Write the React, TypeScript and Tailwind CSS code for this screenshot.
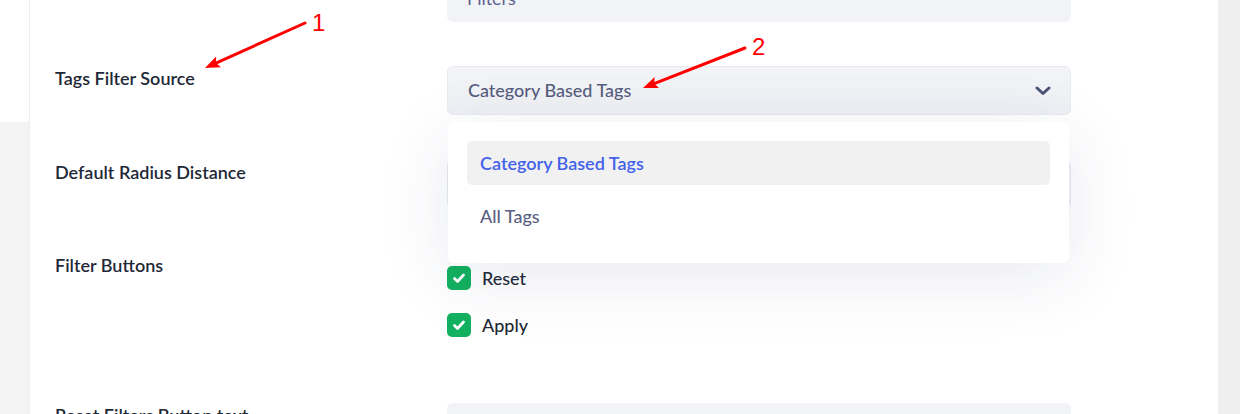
import React from 'react';

const FONT = "font-['Lato','Liberation_Sans',sans-serif]";

// Annotation arrows drawn over the page
const Arrow = ({ x1, y1, x2, y2 }: { x1: number; y1: number; x2: number; y2: number }) => {
  const angle = Math.atan2(y2 - y1, x2 - x1);
  const len = 16;
  const spread = 0.38;
  const ax = x2 - len * Math.cos(angle - spread);
  const ay = y2 - len * Math.sin(angle - spread);
  const bx = x2 - len * Math.cos(angle + spread);
  const by = y2 - len * Math.sin(angle + spread);
  const bx2 = x2 - (len - 4) * Math.cos(angle);
  const by2 = y2 - (len - 4) * Math.sin(angle);
  return (
    <g>
      <line x1={x1} y1={y1} x2={bx2} y2={by2} stroke="#f00" strokeWidth={3} strokeLinecap="round" />
      <polygon points={`${x2},${y2} ${ax},${ay} ${bx2},${by2} ${bx},${by}`} fill="#f00" />
    </g>
  );
};

const Check = () => (
  <span className="flex h-6 w-6 items-center justify-center rounded-[5px] bg-[#12b15f]">
    <svg width="14" height="14" viewBox="0 0 14 14" fill="none">
      <path d="M2.5 7.5l3 3 6-6.5" stroke="#fff" strokeWidth="2.8" strokeLinecap="round" strokeLinejoin="round" />
    </svg>
  </span>
);

const Label = ({ children }: { children: React.ReactNode }) => (
  <div className="w-[417px] shrink-0 pl-[25px] text-[18px] leading-6 font-semibold text-[#1f2937]">{children}</div>
);

const Input = ({ children, className = '' }: { children?: React.ReactNode; className?: string }) => (
  <div className={`flex h-12 w-[624px] items-center rounded-md bg-[#f2f3f6] px-5 text-[18px] text-[#5b6290] ${className}`}>
    {children}
  </div>
);

export default function App() {
  return (
    <div className={`relative flex h-[414px] w-[1240px] overflow-hidden bg-[#efefef] ${FONT}`}>
      <div className="flex w-[30px] shrink-0 flex-col border-r border-[#eeeeee]">
        <div className="h-[122px] bg-white" />
        <div className="flex-1 bg-[#f3f3f3]" />
      </div>
      <div className="relative w-[1188px] shrink-0 bg-white">
        <div className="mt-[-25px] flex flex-col gap-[44px]">
          <div className="flex">
            <Label>{''}</Label>
            <Input className="h-[47px]">Filters</Input>
          </div>

          <div className="flex items-start">
            <Label>Tags Filter Source</Label>
            <div className="relative z-10">
              <div className="flex h-[49px] w-[624px] items-center justify-between rounded-md border border-[#e9eaf0] bg-gradient-to-b from-[#f3f4f7] to-[#eff0f4] pr-[19px] pl-5 text-[18px] font-medium text-[#565d7e]">
                <span>Category Based Tags</span>
                <svg width="16" height="10" viewBox="0 0 16 10" fill="none">
                  <path d="M2 2l6 5.5L14 2" stroke="#4a5276" strokeWidth="3" strokeLinecap="round" strokeLinejoin="round" />
                </svg>
              </div>
              <div className="absolute top-[56px] left-px w-[621px] rounded-md bg-white px-[19px] pt-[19px] pb-[21px] shadow-[0_14px_70px_rgba(40,50,110,0.10)]">
                <div className="flex h-[44px] items-center rounded-[5px] bg-[#f1f1f1] px-[13px] text-[18px] font-semibold text-[#4262ea]">
                  Category Based Tags
                </div>
                <div className="flex h-[57px] items-center px-[13px] pt-[6px] text-[18px] font-medium text-[#5b6182]">All Tags</div>
              </div>
            </div>
          </div>

          <div className="flex items-start pt-px">
            <Label>Default Radius Distance</Label>
            <Input className="border border-[#e9eaf0]" />
          </div>

          <div className="flex items-start pt-px">
            <Label>Filter Buttons</Label>
            <div className="flex flex-col gap-[23px] pt-[13px] pb-[22px]">
              <label className="flex items-center gap-[11px] text-[18px] leading-6 font-medium text-[#1f2937]">
                <Check />
                Reset
              </label>
              <label className="flex items-center gap-[11px] text-[18px] leading-6 font-medium text-[#1f2937]">
                <Check />
                Apply
              </label>
            </div>
          </div>

          <div className="flex items-start">
            <Label>Reset Filters Button text</Label>
            <Input />
          </div>
        </div>
      </div>
      <div className="w-[22px] shrink-0 bg-[#efefef]" />

      <svg className="pointer-events-none absolute inset-0 z-20" width="1240" height="414">
        <Arrow x1={305} y1={23} x2={205} y2={68} />
        <text x="312" y="31" fill="#f00" fontSize="24" fontFamily="Liberation Sans, sans-serif">1</text>
        <Arrow x1={745} y1={48} x2={643} y2={88} />
        <text x="752" y="55" fill="#f00" fontSize="24" fontFamily="Liberation Sans, sans-serif">2</text>
      </svg>
    </div>
  );
}
